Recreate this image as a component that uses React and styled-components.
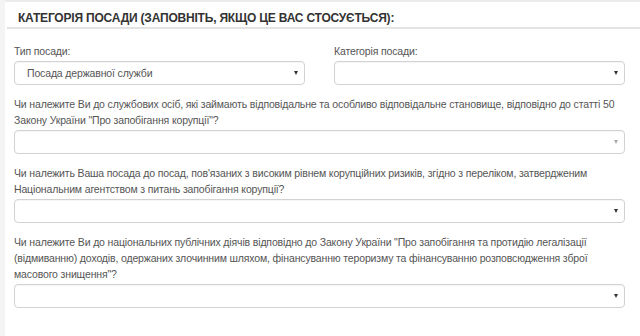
import React from 'react';
import styled, { createGlobalStyle } from 'styled-components';

const GlobalStyle = createGlobalStyle`
  html, body {
    margin: 0;
    padding: 0;
    background: #f4f4f4;
  }
  body {
    font-family: 'Liberation Sans', Arial, sans-serif;
    color: #555;
  }
`;

const Panel = styled.section`
  margin-left: 5px;
  height: 336px;
  overflow: hidden;
  background: #fff;
  border-top: 2px solid #ececec;
  box-sizing: border-box;
`;

const Heading = styled.h3`
  margin: 0 0 0 2px;
  padding: 8px 0 1px 11px;
  border-bottom: 2px solid #e3e3e3;
  font-size: 12px;
  letter-spacing: -0.2px;
  font-weight: bold;
  line-height: 16px;
  color: #333;
  text-transform: uppercase;
`;

const Body = styled.div`
  padding: 14px 15px 0 9px;
  display: flex;
  flex-direction: column;
  gap: 11px;
`;

const Row = styled.div`
  display: grid;
  grid-template-columns: 1fr 1fr;
  column-gap: 29px;
`;

const Field = styled.div`
  display: flex;
  flex-direction: column;
`;

const Label = styled.label`
  font-size: 10.5px;
  letter-spacing: -0.15px;
  line-height: 16px;
  color: #555;
  margin-bottom: 2px;
`;

const Select = styled.div`
  position: relative;
  height: 24px;
  box-sizing: border-box;
  border: 1px solid #d2d2d2;
  border-radius: 4px;
  background: #fff;
  box-shadow: inset 0 1px 1px rgba(0, 0, 0, 0.04);
  font-size: 10.5px;
  letter-spacing: -0.15px;
  line-height: 22px;
  color: #555;
  padding-left: 12px;

  &::after {
    content: '';
    position: absolute;
    right: 6px;
    top: 9px;
    border: 2.5px solid transparent;
    border-top: 4px solid ${(p) => (p.$light ? '#aaa' : '#333')};
    border-bottom: none;
  }
`;

const questions = [
  {
    text: 'Чи належите Ви до службових осіб, які займають відповідальне та особливо відповідальне становище, відповідно до статті 50 Закону України "Про запобігання корупції"?',
    light: true,
  },
  {
    text: "Чи належить Ваша посада до посад, пов'язаних з високим рівнем корупційних ризиків, згідно з переліком, затвердженим Національним агентством з питань запобігання корупції?",
  },
  {
    text: 'Чи належите Ви до національних публічних діячів відповідно до Закону України "Про запобігання та протидію легалізації (відмиванню) доходів, одержаних злочинним шляхом, фінансуванню тероризму та фінансуванню розповсюдження зброї масового знищення"?',
  },
];

export default function App() {
  return (
    <>
      <GlobalStyle />
      <Panel>
        <Heading>Категорія посади (заповніть, якщо це вас стосується):</Heading>
        <Body>
          <Row>
            <Field>
              <Label>Тип посади:</Label>
              <Select>Посада державної служби</Select>
            </Field>
            <Field>
              <Label>Категорія посади:</Label>
              <Select />
            </Field>
          </Row>
          {questions.map((q, i) => (
            <Field key={i}>
              <Label>{q.text}</Label>
              <Select $light={q.light} />
            </Field>
          ))}
        </Body>
      </Panel>
    </>
  );
}
